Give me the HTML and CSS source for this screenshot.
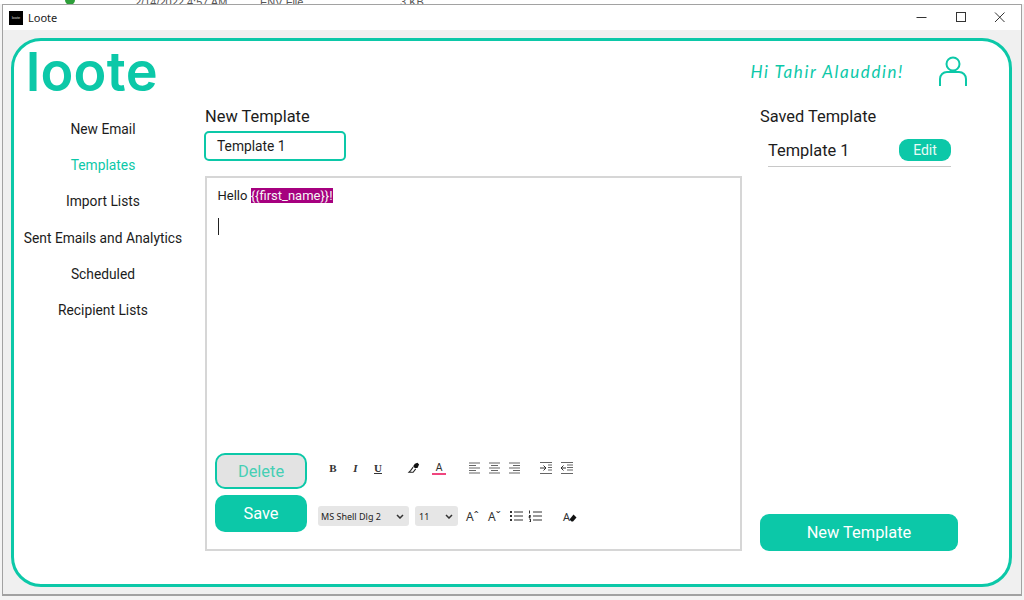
FILE: index.html
```html
<!DOCTYPE html>
<html lang="en">
<head>
<meta charset="utf-8">
<title>Loote</title>
<link rel="stylesheet" href="styles.css">
</head>
<body>
<div class="desktop-strip">
  <span class="strip-dot"></span>
  <span class="strip-date">2/14/2022 4:57 AM</span>
  <span class="strip-type">ENV File</span>
  <span class="strip-size">3 KB</span>
</div>
<div class="window">
  <div class="titlebar">
    <span class="app-icon">loote</span>
    <span class="app-title">Loote</span>
    <div class="win-controls">
      <svg class="win-btn" viewBox="0 0 39 26"><path d="M14.5 12.500h10" /></svg>
      <svg class="win-btn" viewBox="0 0 39 26"><rect x="15.5" y="7.500" width="9" height="9" /></svg>
      <svg class="win-btn" viewBox="0 0 39 26"><path d="M15 7.500l9.500 9.500M24.500 7.500L15 17" /></svg>
    </div>
  </div>
  <div class="client">
    <div class="card">
      <header class="card-head">
        <span class="logo">loote</span>
        <span class="greeting">Hi Tahir Alauddin!</span>
        <svg class="avatar" viewBox="0 0 30 31"><circle cx="15" cy="8" r="6.5" /><path d="M2 30V23a7 7 0 0 1 7-7h12a7 7 0 0 1 7 7v7" /></svg>
      </header>
      <div class="main">
        <nav class="nav">
          <a class="nav-item">New Email</a>
          <a class="nav-item is-active">Templates</a>
          <a class="nav-item">Import Lists</a>
          <a class="nav-item">Sent Emails and Analytics</a>
          <a class="nav-item">Scheduled</a>
          <a class="nav-item">Recipient Lists</a>
        </nav>
        <section class="composer">
          <h2 class="heading">New Template</h2>
          <div class="name-input">Template 1</div>
          <div class="editor">
            <div class="editor-body">
              <p class="line">Hello <span class="token">{{first_name}}!</span></p>
              <span class="caret"></span>
            </div>
            <div class="editor-foot">
              <div class="actions">
                <button class="btn btn-delete">Delete</button>
                <button class="btn btn-save">Save</button>
              </div>
              <div class="toolbars">
                <div class="toolrow">
                  <div class="group group-format">
                    <b class="glyph">B</b><i class="glyph glyph-i">I</i><u class="glyph">U</u>
                  </div>
                  <div class="group group-colour">
                    <svg class="icon" viewBox="0 0 14 14"><path class="solid" d="M8 2l3-1 2 2-2 4-3 0-2-2z" /><path class="line-i" d="M6 6L3 10l-2 2h5l3-4" /></svg>
                    <span class="font-colour">A</span>
                  </div>
                  <div class="group group-align">
                    <svg class="icon" viewBox="0 0 14 12"><path class="line-g" d="M2 1h11M2 3.500h7M2 6h11M2 8.500h7M2 11h11" /></svg>
                    <svg class="icon" viewBox="0 0 14 12"><path class="line-g" d="M2 1h11M4 3.500h7M2 6h11M4 8.500h7M2 11h11" /></svg>
                    <svg class="icon" viewBox="0 0 14 12"><path class="line-g" d="M2 1h11M6 3.500h7M2 6h11M6 8.500h7M2 11h11" /></svg>
                  </div>
                  <div class="group group-indent">
                    <svg class="icon" viewBox="0 0 14 12"><path class="line-g" d="M1 .5h12M9 3h4M9 5.500h4M9 8h4M1 11.500h12" /><path class="line-k" d="M1 6h6M4.500 3.500L7 6 4.500 8.500" /></svg>
                    <svg class="icon" viewBox="0 0 14 12"><path class="line-g" d="M1 .5h12M7 3h6M7 5.500h6M7 8h6M1 11.500h12" /><path class="line-k" d="M6 6H1M3.500 3.500L1 6l2.500 2.500" /></svg>
                  </div>
                </div>
                <div class="toolrow">
                  <div class="select select-font"><span>MS Shell Dlg 2</span><svg class="chev" viewBox="0 0 8 5"><path d="M1 1l3 3 3-3" /></svg></div>
                  <div class="select select-size"><span>11</span><svg class="chev" viewBox="0 0 8 5"><path d="M1 1l3 3 3-3" /></svg></div>
                  <span class="grow-a">Aˆ</span>
                  <span class="shrink-a">Aˇ</span>
                  <svg class="icon icon-list" viewBox="0 0 14 12"><path class="line-k" d="M5 2h9M5 6h9M5 10h9" /><path class="dots" d="M1 .9h2v2H1zM1 4.900h2v2H1zM1 8.900h2v2H1z" /></svg>
                  <svg class="icon icon-list2" viewBox="0 0 14 12"><path class="line-k" d="M5 2h9M5 6h9M5 10h9M1.500 .5v3M1 5.500h1.500v1H1v1h1.500M1 9h1.500v3H1" /></svg>
                  <span class="clear-format"><span>A</span><svg class="eraser" viewBox="0 0 8 8"><path d="M4.500 .5l3 3L4 7.500H2.500L.5 5.500z" /></svg></span>
                </div>
              </div>
            </div>
          </div>
        </section>
        <aside class="saved">
          <h2 class="heading">Saved Template</h2>
          <div class="saved-row">
            <span class="saved-name">Template 1</span>
            <button class="btn-edit">Edit</button>
          </div>
          <button class="btn-new">New Template</button>
        </aside>
      </div>
    </div>
  </div>
</div>
</body>
</html>
```
FILE: styles.css
```css
* { box-sizing: border-box; }
html, body { margin: 0; height: 100%; }
body {
  width: 1024px;
  height: 600px;
  overflow: hidden;
  background: #f4f4f4;
  font-family: Roboto, "Liberation Sans", sans-serif;
  color: #1c1c1c;
}
p, h2 { margin: 0; }
button { font-family: inherit; border: 0; padding: 0; }

.desktop-strip {
  height: 4px;
  overflow: hidden;
  background: #fff;
  display: flex;
  align-items: flex-end;
  font: 11px "Liberation Sans", sans-serif;
  color: #555;
  line-height: 4px;
}
.strip-dot { width: 10px; height: 10px; border-radius: 50%; background: #2e9e3a; margin: 0 0 -1px 65px; flex: none; }
.strip-date { margin-left: 60px; width: 125px; }
.strip-type { width: 140px; }

.window {
  margin: 0 2px;
  height: 592px;
  border: 1px solid #a2a2a2;
  border-bottom-width: 2px;
  background: #f0f0f0;
  display: flex;
  flex-direction: column;
}
.titlebar {
  height: 25px;
  background: #fff;
  display: flex;
  align-items: center;
  padding-left: 6px;
  flex: none;
}
.app-icon {
  width: 14px;
  height: 14px;
  background: #000;
  color: #ddd;
  font: 4px/14px "Liberation Sans", sans-serif;
  text-align: center;
  overflow: hidden;
}
.app-title { margin-left: 5px; font: 11px "Noto Sans", sans-serif; color: #222; }
.win-controls { margin-left: auto; display: flex; margin-right: 2px; }
.win-btn { width: 39px; height: 26px; fill: none; stroke: #333; stroke-width: 1; }

.client { flex: 1; padding: 8px; min-height: 0; }
.card {
  height: 549px;
  width: 1001px;
  border: 3px solid #0cc8a8;
  border-radius: 30px;
  background: #fff;
  display: flex;
  flex-direction: column;
}
.card-head {
  height: 63px;
  flex: none;
  display: flex;
  align-items: center;
  padding: 0 41px 0 12px;
}
.logo {
  font: 600 54px/1 Inter, sans-serif;
  color: #0cc8a8;
  letter-spacing: 0.3px;
  margin-top: -2px;
}
.greeting {
  margin-left: auto;
  font: italic 400 17px Lato, sans-serif;
  color: #0cc8a8;
  letter-spacing: 1.600px;
  margin-top: -3px;
}
.avatar { width: 30px; height: 31px; margin-left: 34px; margin-top: -3px; fill: none; stroke: #0cc8a8; stroke-width: 2; }

.main {
  flex: 1;
  min-height: 0;
  display: flex;
  padding: 2px 0 33px;
}
.nav {
  width: 178px;
  flex: none;
  display: flex;
  flex-direction: column;
  padding-top: 5px;
}
.nav-item {
  height: 36.200px;
  display: flex;
  align-items: center;
  justify-content: center;
  font-size: 13.800px;
  white-space: nowrap;
}
.is-active { color: #0cc8a8; }

.composer {
  width: 538px;
  margin-left: 12px;
  flex: none;
  display: flex;
  flex-direction: column;
}
.heading { font-size: 16.400px; font-weight: 400; line-height: 20px; margin: 1px 0 0 1px; }
.name-input {
  margin-top: 4px;
  width: 142px;
  height: 30px;
  border: 2px solid #0cc8a8;
  border-radius: 5px;
  font-size: 13.800px;
  line-height: 26px;
  padding-left: 11px;
}
.editor {
  margin: 15px 0 0 1px;
  flex: 1;
  border: 2px solid #d6d6d6;
  display: flex;
  flex-direction: column;
}
.editor-body { flex: 1; padding: 10px 0 0 10.500px; }
.line { font-size: 13px; line-height: 16px; }
.token { background: #a6007f; color: #f5f5f5; }
.caret { display: block; width: 1px; height: 17px; background: #222; margin-top: 14px; }
.editor-foot { display: flex; padding: 0 0 17px 8px; }
.actions { width: 92px; display: flex; flex-direction: column; gap: 6px; flex: none; }
.btn { width: 92px; border-radius: 10px; font-size: 16.400px; }
.btn-delete { height: 36px; border: 2px solid #0cc8a8; background: #e3e3e3; color: #45cfb4; }
.btn-save { height: 37px; background: #0cc8a8; color: #fff; }

.toolbars { flex: 1; padding-left: 11px; display: flex; flex-direction: column; gap: 28px; padding-top: 5px; }
.toolrow { display: flex; align-items: center; height: 20px; }
.group { display: flex; align-items: center; }
.glyph { width: 14px; text-align: center; font: bold 11px "Liberation Serif", serif; color: #333; }
.glyph-i { font-style: italic; }
.group-format { gap: 8.500px; margin-left: 8px; }
.group-colour { gap: 11px; margin-left: 22px; }
.group-align { gap: 6px; margin-left: 21px; }
.group-indent { gap: 7px; margin-left: 18px; }
.icon { width: 14px; height: 12px; flex: none; fill: none; }
.solid { fill: #111; }
.line-i { stroke: #222; stroke-width: 1.200; }
.line-g { stroke: #666; stroke-width: 1.200; }
.line-k { stroke: #333; stroke-width: 1; }
.dots { fill: #333; }
.font-colour {
  width: 14px;
  text-align: center;
  font: 10px/11px "Liberation Sans", sans-serif;
  color: #333;
  border-bottom: 2px solid #f0457f;
}
.select {
  height: 20px;
  background: #e6e6e6;
  border-radius: 3px;
  display: flex;
  align-items: center;
  justify-content: space-between;
  padding: 0 5px 0 3px;
  font: 9px "Noto Sans", sans-serif;
  color: #222;
}
.select-font { width: 91px; }
.select-size { width: 43px; margin-left: 6px; padding-left: 4px; }
.chev { width: 8px; height: 5px; fill: none; stroke: #333; stroke-width: 1.500; }
.grow-a, .shrink-a { font: 12px "Noto Sans", sans-serif; color: #333; width: 14px; white-space: nowrap; }
.grow-a { margin-left: 8px; }
.shrink-a { margin-left: 8px; }
.icon-list { margin-left: 7px; }
.icon-list2 { margin-left: 5px; }
.clear-format {
  margin-left: 21px;
  display: flex;
  align-items: center;
  font: 11px "Noto Sans", sans-serif;
  color: #333;
}
.eraser { width: 8px; height: 8px; margin: 4px 0 0 -1px; fill: #111; }

.saved {
  width: 198px;
  margin-left: 18px;
  flex: none;
  display: flex;
  flex-direction: column;
}
.saved .heading { margin-left: 0; }
.saved-row {
  margin: 12px 0 0 8px;
  width: 183px;
  height: 28px;
  border-bottom: 1px solid #c8c8c8;
  display: flex;
  justify-content: space-between;
  align-items: flex-start;
}
.saved-name { font-size: 16.400px; line-height: 23px; }
.btn-edit {
  width: 52px;
  height: 22px;
  border-radius: 9px;
  background: #0cc8a8;
  color: #eafaf6;
  font-size: 14px;
}
.btn-new {
  margin-top: auto;
  height: 37px;
  border-radius: 9px;
  background: #0cc8a8;
  color: #fff;
  font-size: 16.400px;
}
```
